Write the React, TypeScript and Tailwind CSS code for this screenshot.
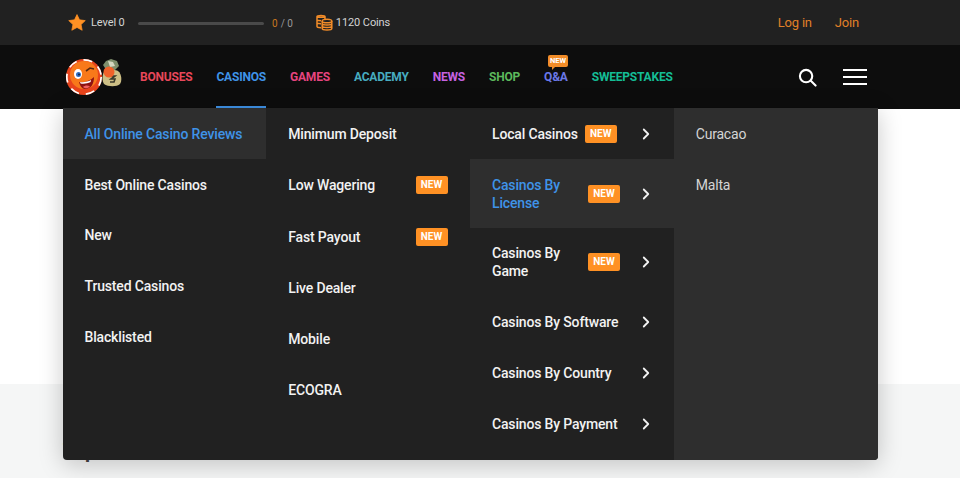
import { ChevronRight } from 'lucide-react';

const navItems = [
  { label: 'BONUSES', color: 'text-[#e8475a]' },
  { label: 'CASINOS', color: 'text-[#3f93e8]', active: true },
  { label: 'GAMES', color: 'text-[#e5447f]' },
  { label: 'ACADEMY', color: 'text-[#47acc0]' },
  { label: 'NEWS', color: 'text-[#c562e0]' },
  { label: 'SHOP', color: 'text-[#5cb85c]' },
  { label: 'Q&A', color: 'text-[#6a78e8]', isNew: true },
  { label: 'SWEEPSTAKES', color: 'text-[#14bd95]' },
];

type Item = { label: string; isNew?: boolean; active?: boolean; tall?: boolean; arrow?: boolean };

const col1: Item[] = [
  { label: 'All Online Casino Reviews', active: true },
  { label: 'Best Online Casinos' },
  { label: 'New' },
  { label: 'Trusted Casinos' },
  { label: 'Blacklisted' },
];

const col2: Item[] = [
  { label: 'Minimum Deposit' },
  { label: 'Low Wagering', isNew: true },
  { label: 'Fast Payout', isNew: true },
  { label: 'Live Dealer' },
  { label: 'Mobile' },
  { label: 'ECOGRA' },
];

const col3: Item[] = [
  { label: 'Local Casinos', isNew: true, arrow: true },
  { label: 'Casinos By License', isNew: true, active: true, tall: true, arrow: true },
  { label: 'Casinos By Game', isNew: true, tall: true, arrow: true },
  { label: 'Casinos By Software', arrow: true },
  { label: 'Casinos By Country', arrow: true },
  { label: 'Casinos By Payment', arrow: true },
];

function NewBadge() {
  return (
    <span className="flex h-[18px] w-[32px] shrink-0 items-center justify-center rounded-[2px] bg-[#ff9124] text-[10px] font-bold tracking-normal text-white">
      NEW
    </span>
  );
}

function MenuRow({ item }: { item: Item }) {
  const height = item.tall ? 'h-[68.75px]' : item.isNew && !item.arrow ? 'h-[51.75px]' : 'h-[50.75px]';
  return (
    <div
      className={`flex items-center pl-[22px] text-[14px] leading-[18px] font-medium tracking-[-0.16px] ${height} ${
        item.active ? 'bg-[#2e2e2e] text-[#3f93e8]' : 'text-[#f2f2f2]'
      } ${item.arrow ? 'pr-[19px]' : 'pr-[22.5px]'} ${item.tall && !item.active ? '' : 'pt-[1px]'}`}
    >
      <span className={item.tall ? 'w-[96px]' : item.arrow ? 'whitespace-nowrap' : 'grow whitespace-nowrap'}>{item.label}</span>
      {item.isNew && (
        <span className={item.arrow ? (item.tall ? '' : 'ml-[7px]') : ''}>
          <NewBadge />
        </span>
      )}
      {item.arrow && <ChevronRight className="ml-auto h-[18px] w-[18px] text-[#f2f2f2]" strokeWidth={2.4} />}
    </div>
  );
}

function Logo() {
  return (
    <svg width="58" height="40" viewBox="0 0 58 40" className="shrink-0">
      {/* money bag */}
      <path d="M38 8l3-4 5-2 6 2 2 5-4 4-8 1z" fill="#7f8f6c" />
      <path d="M43 4l5 1 2 4-5 1z" fill="#d5d8c0" />
      <path d="M39 15c3-2 11-3 14-1 4 3 4 10 2 13-3 3-12 3-16 0-2-3-2-9 0-12z" fill="#cdbf85" />
      <path d="M45 19h5l-4 3h4l-1 3h-4" fill="none" stroke="#3b3a2a" strokeWidth="1.6" />
      <circle cx="44" cy="15" r="5.5" fill="#f0622a" />
      {/* chip */}
      <circle cx="19" cy="20" r="18" fill="#e8441c" />
      <circle cx="19" cy="20" r="17.2" fill="none" stroke="#ffffff" strokeWidth="1.7" strokeDasharray="9 7" />
      <circle cx="19" cy="18" r="14" fill="#f8791a" />
      {/* face */}
      <ellipse cx="13" cy="17" rx="4" ry="5" fill="#ffffff" />
      <circle cx="13.5" cy="17.5" r="2.5" fill="#2f6fc0" />
      <circle cx="14" cy="17.5" r="1" fill="#12233f" />
      <path d="M21 14l4-3 4 1" fill="none" stroke="#5a2a10" strokeWidth="1.6" />
      <path d="M14 25c5 1 11-1 15-5 0 7-3 12-9 12-3 0-5-3-6-7z" fill="#8e1212" />
      <path d="M15 25c4 .6 8-.4 11-2l-.4 2c-3 1.400-6 2-10 1.500z" fill="#ffffff" />
      <path d="M18 30c2-2 5-2 7-.5-2 2-5 2.500-7 .5z" fill="#f06060" />
    </svg>
  );
}

function Coins() {
  return (
    <svg width="17" height="17" viewBox="0 0 17 17" fill="none" stroke="#f28c28" strokeWidth="1.5">
      <path d="M1 2.500C1 1 9 1 9 2.500v2.500M1 2.500v10c0 .8 2 1.200 4 1.200M1 5.500c0 .8 2 1.200 4 1.200M1 8.500c0 .8 2 1.200 4 1.200M1 2.500c0 1 8 1 8 0" />
      <ellipse cx="11" cy="7" rx="4.800" ry="1.800" />
      <path d="M6.200 7v7.500c0 2 9.600 2 9.600 0V7M6.200 9.600c0 2 9.600 2 9.600 0M6.200 12c0 2 9.600 2 9.600 0" />
    </svg>
  );
}

export default function App() {
  return (
    <div className="relative h-[478px] w-[960px] overflow-hidden bg-[#f5f6f6] font-['Roboto',sans-serif]">
      {/* top bar */}
      <div className="flex h-[45px] items-center bg-[#212121] pt-[1px] pr-[101px] pl-[68px]">
        <svg width="18" height="17" viewBox="0 0 24 23" className="mb-[2px] shrink-0">
          <path
            d="M12 0.800l3.400 7.100 7.800 1-5.700 5.400 1.500 7.700L12 18.200 5 22l1.500-7.700L.8 8.900l7.800-1z"
            fill="#ff9124"
            stroke="#ff9124"
            strokeLinejoin="round"
          />
        </svg>
        <span className="ml-[5px] w-[34px] text-[11px] tracking-[-0.1px] whitespace-nowrap text-[#d4d4d4]">Level 0</span>
        <div className="mt-[1px] ml-[13px] h-[3px] w-[126px] rounded-full bg-[#4a4a4a]" />
        <span className="ml-[8px] text-[10px] text-[#c9771f]">0</span>
        <span className="ml-[3px] text-[10px] text-[#9a9a9a]">/ 0</span>
        <span className="mb-[2px] ml-[23px]">
          <Coins />
        </span>
        <span className="ml-[3px] text-[11px] tracking-[-0.1px] text-[#d4d4d4]">1120 Coins</span>
        <span className="ml-auto text-[13px] tracking-[-0.2px] text-[#e08028]">Log in</span>
        <span className="ml-[23px] text-[13px] tracking-[-0.2px] text-[#e08028]">Join</span>
      </div>

      {/* main nav */}
      <div className="flex h-[64px] items-center bg-[#0d0d0d] pr-[93px] pl-[65px]">
        <Logo />
        <div className="ml-[17px] flex h-full items-stretch gap-[24px]">
          {navItems.map((item) => (
            <div
              key={item.label}
              className={`relative flex items-center border-b-[3px] pt-[3px] text-[12px] font-bold tracking-[-0.2px] ${item.color} ${
                item.active ? 'border-[#3f93e8]' : 'border-transparent'
              }`}
            >
              {item.isNew && (
                <span className="absolute top-[10px] left-[4px] flex h-[12px] w-[20px] items-center justify-center rounded-[2px] bg-[#f28c28] text-[7.5px] font-bold tracking-normal text-white">
                  NEW
                  <span className="absolute top-[11px] left-[4px] h-0 w-0 border-t-[4px] border-r-[4px] border-t-[#f28c28] border-r-transparent" />
                </span>
              )}
              {item.label}
            </div>
          ))}
        </div>
        <svg width="19" height="19" viewBox="0 0 20 20" fill="none" stroke="#ffffff" strokeWidth="2.200" className="ml-auto">
          <circle cx="8.500" cy="8.500" r="6.500" />
          <path d="M13.500 13.500L18.500 18.500" strokeLinecap="round" />
        </svg>
        <div className="ml-[26px] flex w-[24px] flex-col gap-[5px]">
          <div className="h-[2px] bg-white" />
          <div className="h-[2px] bg-white" />
          <div className="h-[2px] bg-white" />
        </div>
      </div>

      {/* page content behind the menu */}
      <div className="h-[275px] bg-white" />
      <div className="pt-[53px] pl-[63px] text-[20px] leading-[28px] font-bold text-[#444444]">Top</div>

      {/* casinos dropdown */}
      <div className="absolute top-[108px] left-[62.5px] grid h-[352px] w-[815px] grid-cols-4 overflow-hidden rounded-b-[4px] bg-[#212121] shadow-[0_4px_24px_rgba(0,0,0,0.22)]">
        <div>
          {col1.map((item) => (
            <MenuRow key={item.label} item={item} />
          ))}
        </div>
        <div>
          {col2.map((item) => (
            <MenuRow key={item.label} item={item} />
          ))}
        </div>
        <div>
          {col3.map((item) => (
            <MenuRow key={item.label} item={item} />
          ))}
        </div>
        <div className="bg-[#2e2e2e]">
          {['Curacao', 'Malta'].map((label) => (
            <div key={label} className="flex h-[50.75px] items-center pt-[2px] pl-[22px] text-[14px] tracking-[-0.2px] text-[#d4d4d4]">
              {label}
            </div>
          ))}
        </div>
      </div>
    </div>
  );
}
